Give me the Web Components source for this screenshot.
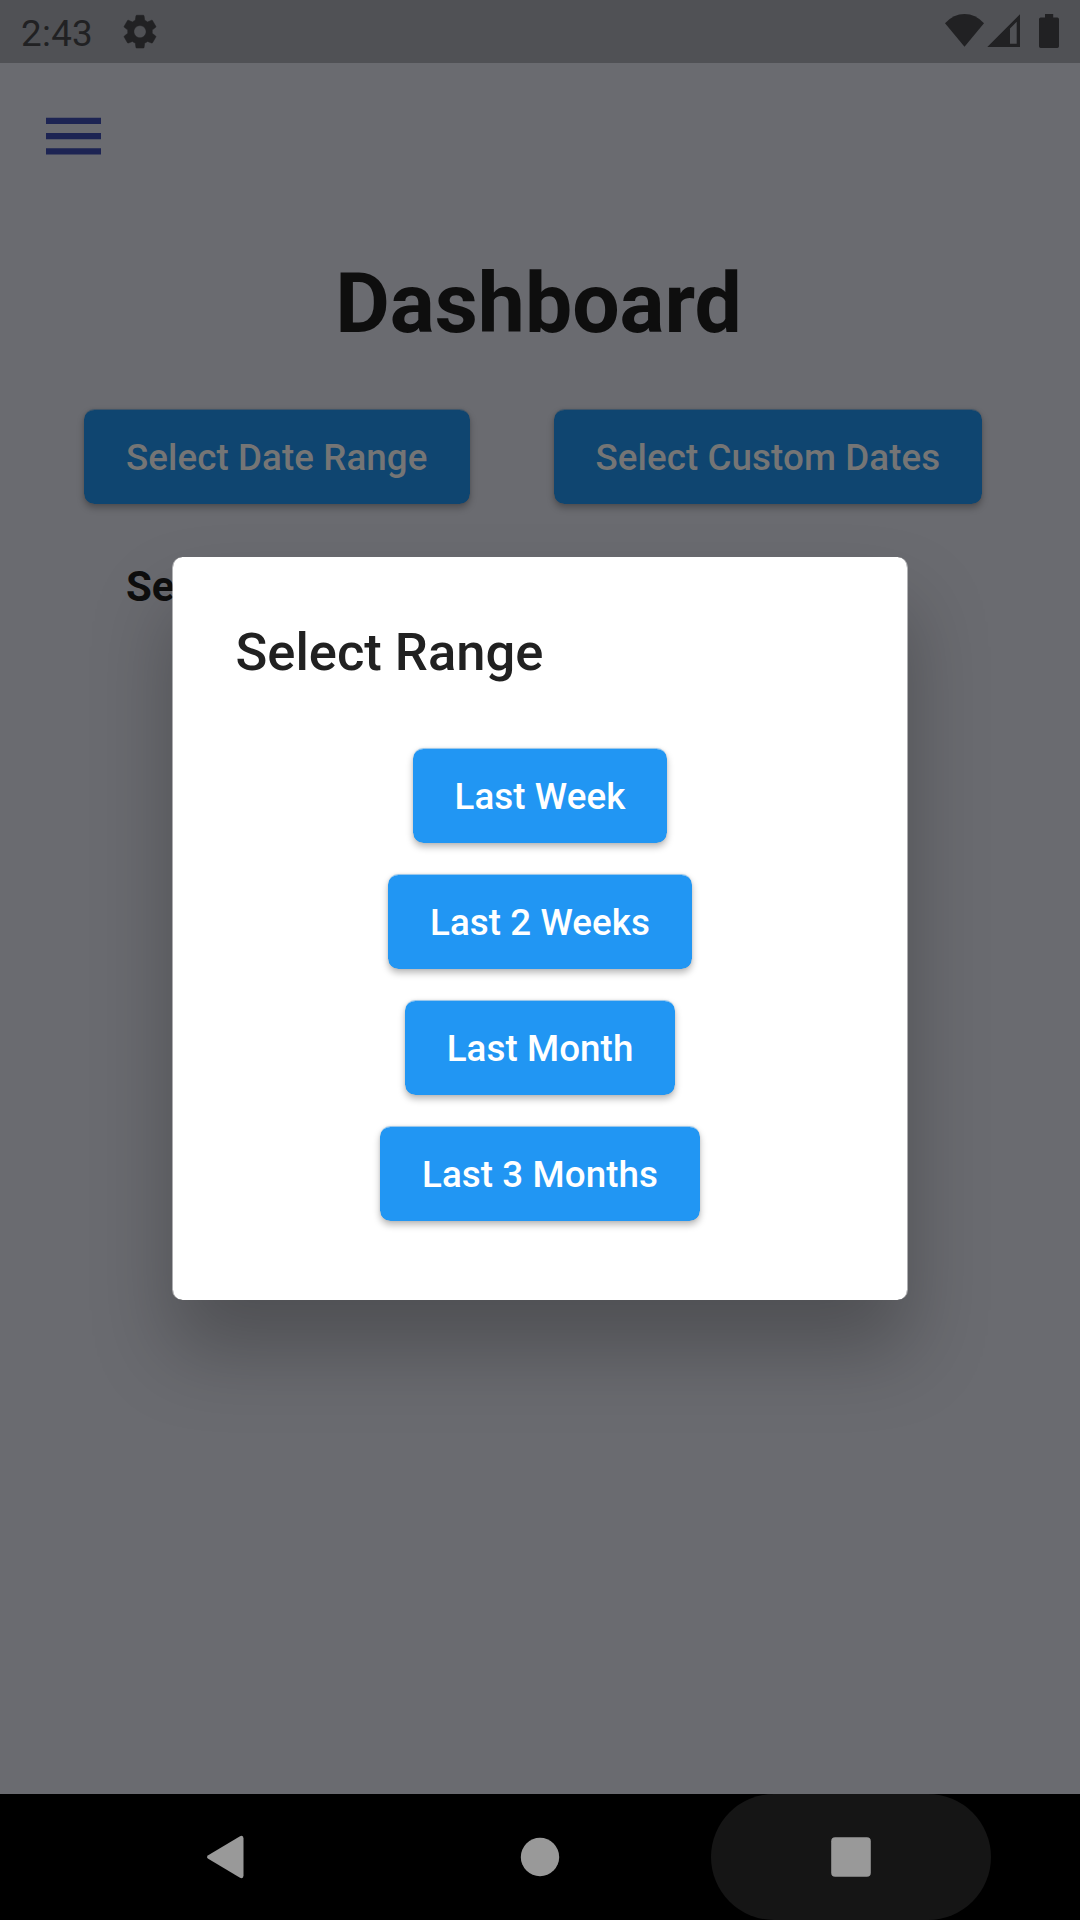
<!DOCTYPE html>
<html lang="en">
<head>
<meta charset="utf-8">
<title>Dashboard</title>
<style>
html,body{margin:0;padding:0;height:1920px;overflow:hidden;background:#000;font-family:Roboto,sans-serif}
</style>
</head>
<body>
<app-screen></app-screen>
<script>
const define = (name, html) => {
  const t = document.createElement('template');
  t.innerHTML = html;
  customElements.define(name, class extends HTMLElement {
    constructor() {
      super();
      this.attachShadow({ mode: 'open' }).append(t.content.cloneNode(true));
    }
  });
};

define('status-bar', `
<style>
:host{display:flex;align-items:center;box-sizing:border-box;height:63px;padding:0 21px;background:#505155;color:#212123;font-size:36.75px;line-height:43px}
svg{display:block;fill:currentColor}
.time{width:99px;white-space:nowrap;padding-top:4px;letter-spacing:.3px}
.sys{margin-left:auto;display:flex;align-items:center}
</style>
<span class="time">2:43</span>
<svg width="40" height="40" viewBox="-0.2 0 24.4 24.4"><g stroke="currentColor" stroke-width=".3" stroke-linejoin="round"><path d="M19.430 12.980c.04-.32.07-.64.07-.98s-.03-.66-.07-.98l2.110-1.650c.19-.15.24-.42.12-.64l-2-3.460c-.12-.22-.39-.3-.61-.22l-2.490 1c-.52-.4-1.080-.73-1.690-.98l-.38-2.650C14.460 2.180 14.250 2 14 2h-4c-.25 0-.46.18-.49.42l-.38 2.650c-.61.25-1.170.59-1.690.98l-2.490-1c-.23-.09-.49 0-.61.22l-2 3.460c-.13.22-.07.49.12.64l2.110 1.650c-.04.32-.07.65-.07.98s.03.66.07.98l-2.110 1.650c-.19.15-.24.42-.12.64l2 3.460c.12.22.39.3.61.22l2.490-1c.52.4 1.080.73 1.690.98l.38 2.650c.03.24.24.42.49.42h4c.25 0 .46-.18.49-.42l.38-2.650c.61-.25 1.170-.59 1.690-.98l2.490 1c.23.09.49 0 .61-.22l2-3.460c.12-.22.07-.49-.12-.64l-2.110-1.650zM12 15.700c-2 0-3.700-1.700-3.700-3.700s1.700-3.700 3.700-3.700 3.700 1.700 3.700 3.700-1.700 3.700-3.700 3.700z"/></g></svg>
<div class="sys">
<svg width="115" height="63" viewBox="944 0 115 63">
<path d="M964.5 46.7 945 23.2Q953.500 14 964.500 14T984 23.200Z"/>
<path fill-rule="evenodd" d="M987.300 46.900 1020 14.200V46.900ZM1010 28.500V43.700H1016.700V21.800Z"/>
<path d="M1045 14h8.200v3.600h4.100q1.700 0 1.700 1.700v27q0 1.700-1.700 1.700h-16.600q-1.700 0-1.700-1.700v-27q0-1.700 1.700-1.700h4.300z"/>
</svg>
</div>`);

define('menu-icon', `
<style>:host{display:block;width:73px;height:74px}svg{display:block}</style>
<svg width="73" height="74" viewBox="0 0 73 74" fill="#1d2453"><path d="M10 18.800h55v6.200h-55zM10 34.100h55v6.100h-55zM10 49.300h55v6.200h-55z"/></svg>`);

define('raised-button', `
<style>
:host{display:block;flex:none;padding:15.25px 0 15.75px}
button{display:flex;align-items:center;justify-content:center;box-sizing:border-box;height:95px;margin:0;border:0;border-top:1px solid color-mix(in srgb,var(--fill,#2196f3) 40%,transparent);padding:0 42px;border-radius:10.500px;
background:var(--fill,#2196f3) padding-box;color:var(--ink,#fff);font:500 36.75px/43px Roboto,sans-serif;white-space:nowrap;letter-spacing:.07px;
box-shadow:0 4px 7px rgba(0,0,0,.27),0 0 3px rgba(0,0,0,.08)}
</style>
<button><slot></slot></button>`);

define('dashboard-page', `
<style>
:host{display:flex;flex-direction:column;box-sizing:border-box;height:1731px;background:#6a6b70;color:#0e0e0e;--fill:#0f4570;--ink:#757575}
menu-icon{margin:36px 0 0 36px}
h1{margin:82px 3px 0 0;text-align:center;font-size:84px;line-height:98px;font-weight:700}
.row{display:flex;gap:84px;margin:40.750px 0 0 84px}
p{margin:42px 0 0 126px;font-size:42px;line-height:49px;font-weight:700}
</style>
<menu-icon></menu-icon>
<h1>Dashboard</h1>
<div class="row"><raised-button>Select Date Range</raised-button><raised-button>Select Custom Dates</raised-button></div>
<p>Se</p>`);

define('range-dialog', `
<style>
:host{display:flex;flex-direction:column;align-items:center;box-sizing:border-box;width:736px;height:742.5px;padding:63px 62.5px;border:solid rgba(255,255,255,.5);border-width:0 1px;border-radius:10.5px;background:#fff padding-box;
box-shadow:0 50px 80px rgba(0,0,0,.26)}
h2{align-self:flex-start;box-sizing:border-box;height:60px;padding-top:2px;margin:0 0 52.5px;font-size:52.5px;line-height:60px;font-weight:500;color:#212121;white-space:nowrap}
</style>
<h2><slot name="title"></slot></h2>
<slot></slot>`);

define('nav-bar', `
<style>
:host{display:flex;justify-content:center;gap:31px;height:126px;background:#000}
div{display:flex;align-items:center;justify-content:center;width:280px;border-radius:63px}
.on{background:#151515}
svg{display:block;fill:#999}
</style>
<div><svg width="60" height="60" viewBox="0 0 60 60"><path d="M9.200 28.200 40.600 9.400Q44.500 7.700 44.500 11.500V48.500Q44.500 52.300 40.600 50.600L9.200 31.800Q6.800 30 9.200 28.200Z"/></svg></div>
<div><svg width="60" height="60" viewBox="0 0 60 60"><circle cx="30" cy="30" r="19.200"/></svg></div>
<div class="on"><svg width="60" height="60" viewBox="0 0 60 60"><rect x="10.200" y="10.200" width="39.600" height="39.600" rx="4"/></svg></div>`);

define('app-screen', `
<style>
:host{display:flex;flex-direction:column;position:relative;width:1080px;height:1920px;overflow:hidden}
.overlay{position:absolute;inset:63px 0 126px;display:flex;align-items:center;justify-content:center}
</style>
<status-bar></status-bar>
<dashboard-page></dashboard-page>
<nav-bar></nav-bar>
<div class="overlay">
<range-dialog><span slot="title">Select Range</span>
<raised-button>Last Week</raised-button>
<raised-button>Last 2 Weeks</raised-button>
<raised-button>Last Month</raised-button>
<raised-button>Last 3 Months</raised-button>
</range-dialog>
</div>`);
</script>
</body>
</html>
